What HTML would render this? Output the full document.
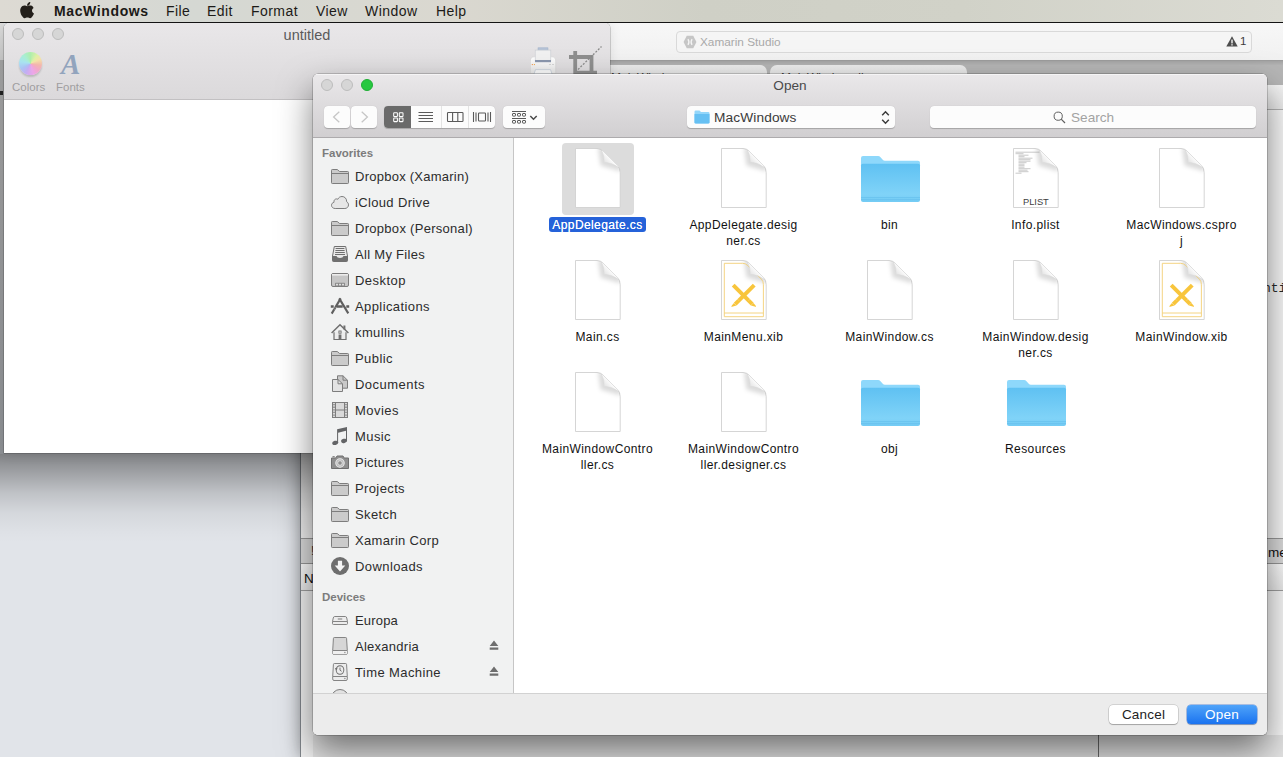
<!DOCTYPE html>
<html>
<head>
<meta charset="utf-8">
<title>Open</title>
<style>
html,body{margin:0;padding:0;}
body{width:1283px;height:757px;overflow:hidden;position:relative;background:#e1e4e9;font-family:"Liberation Sans",sans-serif;color:#222;}
.abs{position:absolute;}
/* menu bar */
#menubar{left:0;top:0;width:1283px;height:22px;background:linear-gradient(90deg,#dddad3 0%,#d5d8d3 15%,#dad8d0 35%,#cfd0c6 55%,#d1d2c8 75%,#dbdbd3 100%);border-bottom:1px solid #141414;z-index:50;}
#menubar span{position:absolute;top:3px;font-size:14px;line-height:17px;color:#1c1a17;white-space:nowrap;letter-spacing:0.45px;}
/* xamarin studio */
#xs{left:300px;top:23px;width:983px;height:734px;background:#e6e6e6;box-shadow:0 0 14px rgba(0,0,0,.3);}
#xs-toolbar{left:0;top:0;width:983px;height:37px;background:linear-gradient(#f7f7f7,#f1f1f1);}
#xs-search{left:376px;top:8px;width:574px;height:20px;border:1px solid #d9d9d9;border-radius:4px;background:#f5f5f5;}
#xs-tabs{left:0;top:37px;width:983px;height:25px;background:#b6b6b6;border-top:1px solid #9d9d9d;}
/* untitled window */
#untitled{left:4px;top:23px;width:606px;height:430px;background:#fff;border-radius:5px 5px 0 0;box-shadow:0 0 0 0.5px rgba(0,0,0,.3),0 1px 12px rgba(0,0,0,.10);z-index:10;}
#untitled .tb{left:0;top:0;width:606px;height:76px;border-radius:5px 5px 0 0;background:linear-gradient(#e9e7e9,#dbd9db);border-bottom:1px solid #c2c0c2;}
.tl{position:absolute;width:10px;height:10px;border-radius:50%;background:#d6d6d6;border:1px solid #bcbcbc;}
/* open dialog */
#dlg{left:313px;top:74px;width:954px;height:661px;background:#fff;border-radius:5px;box-shadow:0 0 0 0.5px rgba(0,0,0,.34),0 16px 34px rgba(0,0,0,.5);z-index:20;overflow:hidden;}
#dlg .head{left:0;top:0;width:954px;height:63px;background:linear-gradient(#eae8ea,#d1cfd1);border-bottom:1px solid #adabad;box-shadow:inset 0 1px 0 rgba(255,255,255,.55);}
#dlg .title{left:0;top:3px;width:954px;text-align:center;font-size:13.6px;line-height:18px;color:#4a4a4a;}
.btn{position:absolute;background:#fcfcfc;border-radius:4px;box-shadow:0 0.5px 0.8px rgba(0,0,0,.22);}
#side{left:0;top:64px;width:200px;height:555px;background:#f1f2f2;border-right:1px solid #c6c6c6;}
#side .h{position:absolute;left:9px;font-size:11.5px;font-weight:bold;color:#7c7c7c;line-height:14px;}
#side .it{position:absolute;left:42px;font-size:13px;letter-spacing:0.3px;line-height:18px;color:#2c2c2c;white-space:nowrap;}
#side .ic{position:absolute;left:17px;width:20px;height:18px;}
#side svg,#files svg{display:block;}
#files{left:201px;top:64px;width:753px;height:555px;background:#fff;}
.lab{position:absolute;width:140px;text-align:center;font-size:12px;letter-spacing:0.4px;line-height:16px;color:#111;white-space:nowrap;}
.sel{background:#2562d9;color:#fff;border-radius:3px;padding:0 3px 0 3px;display:inline-block;height:15px;line-height:17px;text-shadow:0 0 0.6px rgba(255,255,255,.9);}
#foot{left:0;top:619px;width:954px;height:42px;background:#ececec;border-top:1px solid #d2d2d2;}
</style>
</head>
<body>

<svg width="0" height="0" style="position:absolute"><defs>
<filter id="blur1" x="-10%" y="-300%" width="120%" height="700%"><feGaussianBlur stdDeviation="0.8"/></filter>
<filter id="blur2" x="-30%" y="-30%" width="160%" height="160%"><feGaussianBlur stdDeviation="2.2"/></filter>
<clipPath id="docclip"><path d="M2.5 0.5 H24 Q27.5 0.5 30 3 L44.6 17.6 Q47.2 20.4 47.2 24.5 V59.5 H2.5 Z"/></clipPath>
<linearGradient id="flapg" x1="0.85" y1="0.15" x2="0.2" y2="0.75"><stop offset="0" stop-color="#ffffff"/><stop offset="0.55" stop-color="#fbfbfb"/><stop offset="1" stop-color="#e4e4e4"/></linearGradient>
</defs></svg>
<!-- Xamarin Studio window (behind) -->
<div id="xs" class="abs">
  <div id="xs-toolbar" class="abs">
    <div id="xs-search" class="abs">
      <svg class="abs" style="left:6px;top:3px" width="14" height="14" viewBox="0 0 13 13"><polygon points="3.5,0.8 9.5,0.8 12.5,6.5 9.5,12.2 3.5,12.2 0.5,6.5" fill="#c6c6c6"/><path d="M4.6 3.8 Q6.4 6.5 4.6 9.2 M8.4 3.8 Q6.6 6.5 8.4 9.2" stroke="#f5f5f5" stroke-width="1.2" fill="none"/></svg>
      <span class="abs" style="left:23px;top:2px;font-size:11.8px;line-height:17px;color:#a9a9a9;white-space:nowrap">Xamarin Studio</span>
      <svg class="abs" style="left:549px;top:4px" width="12" height="11" viewBox="0 0 12 11"><path d="M6 0.3 L11.7 10.6 L0.3 10.6 Z" fill="#4d4d4d"/><rect x="5.3" y="3.6" width="1.4" height="3.8" fill="#f5f5f5"/><rect x="5.3" y="8.2" width="1.4" height="1.3" fill="#f5f5f5"/></svg>
      <span class="abs" style="left:563px;top:1px;font-size:11.5px;line-height:17px;color:#3c3c3c">1</span>
    </div>
  </div>
  <div id="xs-tabs" class="abs">
    <div class="abs" style="left:0;top:0;width:983px;height:4px;background:linear-gradient(#a4a4a4,#b4b4b4)"></div>
    <div class="abs" style="left:300px;top:4px;width:167px;height:22px;background:linear-gradient(#ededed,#e0e0e0);border-radius:0 7px 0 0;"></div>
    <div class="abs" style="left:470px;top:4px;width:197px;height:22px;background:linear-gradient(#ededed,#e0e0e0);border-radius:7px 7px 0 0;"></div>
    <span class="abs" style="left:311px;top:10px;font-size:12px;line-height:14px;color:#444;white-space:nowrap">MainWindow.cs</span>
    <span class="abs" style="left:481px;top:10px;font-size:12px;line-height:14px;color:#444;white-space:nowrap">MainWindow.xib</span>
    <span class="abs" style="left:452px;top:10px;font-size:11px;line-height:14px;color:#888">×</span>
    <span class="abs" style="left:650px;top:10px;font-size:11px;line-height:14px;color:#888">×</span>
  </div>
  <!-- left sliver of XS -->
  <div class="abs" style="left:0;top:62px;width:1px;height:672px;background:#80858b"></div>
  <div class="abs" style="left:1px;top:62px;width:14px;height:672px;background:#f2f2f2"></div>
  <div class="abs" style="left:1px;top:515px;width:14px;height:24px;background:#dcdcdc;border-top:1px solid #999;border-bottom:1px solid #999"></div>
  <div class="abs" style="left:1px;top:541px;width:14px;height:26px;background:linear-gradient(#ffffff,#ececec);border-bottom:1px solid #a0a0a0"></div>
  <span class="abs" style="left:4px;top:548px;font-size:13.5px;line-height:16px;color:#111">Name</span>
  <span class="abs" style="left:11px;top:520px;font-size:12px;line-height:16px;color:#333">!</span>
  <!-- right sliver of XS -->
  <div class="abs" style="left:967px;top:62px;width:16px;height:672px;background:#f9f9f9"></div>
  <div class="abs" style="left:967px;top:62px;width:16px;height:24px;background:linear-gradient(#f6f6f6,#ececec)"></div>
  <div class="abs" style="left:967px;top:86px;width:16px;height:1px;background:#b4b4b4"></div>
  <span class="abs" style="left:963px;top:258px;font-family:'Liberation Mono',monospace;font-size:13px;line-height:16px;color:#2a2a2a;white-space:nowrap">nti</span>
  <div class="abs" style="left:967px;top:515px;width:16px;height:24px;background:#dcdcdc;border-top:1px solid #999;border-bottom:1px solid #999"></div>
  <div class="abs" style="left:967px;top:541px;width:16px;height:26px;background:linear-gradient(#ffffff,#ececec);border-bottom:1px solid #a0a0a0"></div>
  <span class="abs" style="left:968px;top:522px;font-size:13.5px;line-height:16px;color:#111;white-space:nowrap">me</span>
  <!-- bottom below dialog -->
  <div class="abs" style="left:13px;top:712px;width:970px;height:22px;background:#e4e4e4"></div>
  <div class="abs" style="left:798px;top:700px;width:1px;height:34px;background:#6a6a6a"></div>
</div>

<!-- menu bar -->
<div id="menubar" class="abs">
  <svg class="abs" style="left:20px;top:2px" width="15" height="17" viewBox="0 0 15 17"><path d="M10.3 0 C10.4 1.1 10 2 9.4 2.7 C8.8 3.4 7.9 3.9 7 3.8 C6.9 2.8 7.4 1.8 7.9 1.2 C8.5 0.5 9.5 0 10.3 0 Z M13.6 5.9 C12.6 6.5 12 7.4 12 8.6 C12 10 12.8 11.1 14 11.6 C13.7 12.5 13.3 13.3 12.7 14.1 C12 15.1 11.2 16.2 10.1 16.2 C9 16.2 8.7 15.6 7.4 15.6 C6.1 15.6 5.7 16.2 4.7 16.2 C3.6 16.3 2.8 15.1 2 14.1 C0.5 12 -0.6 8.200000000000001 0.9 5.7 C1.7 4.4 3 3.6 4.4 3.6 C5.5 3.6 6.5 4.3 7.2 4.3 C7.8 4.3 9.1 3.5 10.4 3.6 C11 3.6 12.5 3.8 13.6 5.9 Z" fill="#231f1a"/></svg>
  <span style="left:54px;font-weight:bold;letter-spacing:0.62px">MacWindows</span>
  <span style="left:166px">File</span>
  <span style="left:207px">Edit</span>
  <span style="left:251px">Format</span>
  <span style="left:316px">View</span>
  <span style="left:365px">Window</span>
  <span style="left:436px">Help</span>
</div>

<!-- shadow under untitled window -->
<div class="abs" style="left:0;top:453px;width:330px;height:90px;z-index:5;background:linear-gradient(rgba(0,0,0,.43) 0,rgba(0,0,0,.41) 3px,rgba(0,0,0,.29) 20px,rgba(0,0,0,.15) 40px,rgba(0,0,0,.055) 60px,rgba(0,0,0,.012) 80px,rgba(0,0,0,0) 90px)"></div>
<div class="abs" style="left:0;top:60px;width:4px;height:394px;z-index:5;background:linear-gradient(#a0a0a0,#8c8f93)"></div>
<div class="abs" style="left:0;top:91px;width:3px;height:4px;z-index:5;background:#222"></div>
<div class="abs" style="left:0;top:23px;width:4px;height:37px;z-index:5;background:linear-gradient(#dcdcdc,#c6c6c6)"></div>
<!-- untitled window -->
<div id="untitled" class="abs">
  <div class="tb abs">
    <div class="tl" style="left:8px;top:5px"></div>
    <div class="tl" style="left:28px;top:5px"></div>
    <div class="tl" style="left:48px;top:5px"></div>
    <div class="abs" style="left:0;top:3px;width:606px;text-align:center;font-size:14.5px;line-height:18px;color:#5a5a5a">untitled</div>
    <div class="abs" style="left:15px;top:29px;width:23px;height:23px;border-radius:50%;background:conic-gradient(from 0deg,#a9f0a6 0deg,#dff2a0 40deg,#f6e3a2 65deg,#f5b3a8 100deg,#f4a3c6 130deg,#eea2ea 165deg,#c2a8f4 205deg,#a7c0f6 240deg,#a2e4f2 280deg,#a3f0d2 320deg,#a9f0a6 360deg);box-shadow:0 2px 2px rgba(0,0,0,.18);opacity:.9"></div>
    <div class="abs" style="left:8px;top:57px;font-size:11.5px;line-height:14px;color:#a09ea0">Colors</div>
    <div class="abs" style="left:57px;top:24px;font-family:'Liberation Serif',serif;font-style:italic;font-weight:bold;font-size:29px;line-height:34px;color:#92a4bd">A</div>
    <div class="abs" style="left:52px;top:57px;font-size:11.5px;line-height:14px;color:#a09ea0">Fonts</div>
    <svg class="abs" style="left:526px;top:24px" width="28" height="30" viewBox="0 0 28 30"><defs><linearGradient id="prb" x1="0" y1="0" x2="0" y2="1"><stop offset="0" stop-color="#ffffff"/><stop offset="1" stop-color="#e9e9e9"/></linearGradient></defs><rect x="8" y="0.8" width="10" height="3" fill="#b4c2d6" stroke="#9fb0c8" stroke-width="0.5"/><path d="M0.3 14 Q0.3 9.8 4.5 9.8 H21.5 Q25.7 9.8 25.7 14 V26.5 H0.3 Z" fill="url(#prb)" stroke="#d4d4d4" stroke-width="0.6"/><rect x="5.2" y="3.1" width="15.6" height="11" fill="#f1f1f1" stroke="#c9ccd2" stroke-width="0.6"/><rect x="5" y="13" width="16" height="2.2" fill="#8a96ad"/><rect x="1.8" y="17" width="1.1" height="1.1" fill="#f39a55"/><rect x="3.900000000000001" y="17" width="1.1" height="1.1" fill="#f3b055"/><rect x="19" y="17.2" width="2" height="0.8" fill="#cfcfcf"/><rect x="22" y="17.2" width="2" height="0.8" fill="#cfcfcf"/><path d="M4 27 L5.5 22.6 H20.5 L22 27 Z" fill="#fbfbfb" stroke="#b9c3d2" stroke-width="0.6"/></svg>
    <svg class="abs" style="left:565px;top:22px" width="36" height="32" viewBox="0 0 36 32"><path d="M0 12 H24.4 M22.5 12 V27.7 M6.2 6 V29.6 M4.3 27.7 H28" fill="none" stroke="#8f8f8f" stroke-width="3.8"/><path d="M9 24.5 L32.5 1.5" stroke="#8a8a8a" stroke-width="1.3" stroke-dasharray="2 1.5"/></svg>
  </div>
</div>

<!-- Open dialog -->
<div id="dlg" class="abs">
  <div class="head abs">
    <div class="tl" style="left:8px;top:5px"></div>
    <div class="tl" style="left:28px;top:5px"></div>
    <div class="tl" style="left:48px;top:5px;background:#27c840;border-color:#1fae34"></div>
    <div class="title abs">Open</div>
  </div>
  <!-- toolbar -->
  <div class="btn" style="left:11px;top:32px;width:26px;height:22px"><svg class="abs" style="left:8px;top:5px" width="9" height="12" viewBox="0 0 9 12"><path d="M7.3 0.8 L1.6 6 L7.3 11.2" fill="none" stroke="#c6c6c6" stroke-width="1.3"/></svg></div>
  <div class="btn" style="left:38px;top:32px;width:26px;height:22px"><svg class="abs" style="left:9px;top:5px" width="9" height="12" viewBox="0 0 9 12"><path d="M1.7 0.8 L7.4 6 L1.7 11.2" fill="none" stroke="#c6c6c6" stroke-width="1.3"/></svg></div>
  <div class="btn" style="left:71px;top:32px;width:111px;height:22px;overflow:hidden">
    <div class="abs" style="left:0;top:0;width:27px;height:22px;background:#6a6a6a"></div>
    <div class="abs" style="left:57px;top:0;width:1px;height:22px;background:#e3e3e3"></div>
    <div class="abs" style="left:84px;top:0;width:1px;height:22px;background:#e3e3e3"></div>
    <svg class="abs" style="left:0;top:0" width="111" height="22" viewBox="0 0 111 22">
      <g fill="none" stroke="#fff" stroke-width="1.05"><rect x="9.7" y="6.7" width="3.7" height="3.7" rx="0.5"/><rect x="15.3" y="6.7" width="3.7" height="3.7" rx="0.5"/><rect x="9.7" y="11.9" width="3.7" height="3.7" rx="0.5"/><rect x="15.3" y="11.9" width="3.7" height="3.7" rx="0.5"/></g>
      <path d="M34.5 6.5 H49 M34.5 9.5 H49 M34.5 12.5 H49 M34.5 15.5 H49" stroke="#5a5a5a" stroke-width="1"/>
      <g fill="none" stroke="#5a5a5a" stroke-width="1.1"><rect x="63.5" y="6.5" width="15.5" height="9" rx="0.8"/><path d="M68.6 6.5 V15.5 M73.8 6.5 V15.5"/></g>
      <g fill="none" stroke="#5a5a5a" stroke-width="1.1"><rect x="94.5" y="7" width="7" height="8" rx="0.8"/><path d="M89.5 6 V16 M92 6.5 V15.5 M104 6.5 V15.5 M106.5 6 V16"/></g>
    </svg>
  </div>
  <div class="btn" style="left:190px;top:32px;width:42px;height:22px">
    <svg class="abs" style="left:0;top:0" width="42" height="22" viewBox="0 0 42 22">
      <path d="M9 5.5 H23 M9 12.5 H23" stroke="#5a5a5a" stroke-width="1"/>
      <g fill="none" stroke="#5a5a5a" stroke-width="1"><rect x="9.5" y="7.5" width="3" height="2.6" rx="0.5"/><rect x="14.5" y="7.5" width="3" height="2.6" rx="0.5"/><rect x="19.5" y="7.5" width="3" height="2.6" rx="0.5"/><rect x="9.5" y="14.5" width="3" height="2.6" rx="0.5"/><rect x="14.5" y="14.5" width="3" height="2.6" rx="0.5"/><rect x="19.5" y="14.5" width="3" height="2.6" rx="0.5"/></g>
      <path d="M27.3 10 L30.5 13.2 L33.7 10" fill="none" stroke="#4a4a4a" stroke-width="1.5"/>
    </svg>
  </div>
  <div class="btn" style="left:374px;top:32px;width:208px;height:22px">
    <svg class="abs" style="left:7px;top:4px" width="16" height="14" viewBox="0 0 16 14"><path d="M0.5 1.8 Q0.5 0.5 1.8 0.5 H5.5 L7 2 H14.2 Q15.5 2 15.5 3.3 V12.2 Q15.5 13.5 14.2 13.5 H1.8 Q0.5 13.5 0.5 12.2 Z" fill="#93d6fa"/><path d="M0.5 4 H15.5 V12.2 Q15.5 13.5 14.2 13.5 H1.8 Q0.5 13.5 0.5 12.2 Z" fill="#66c0f3"/></svg>
    <span class="abs" style="left:27px;top:3px;font-size:13.7px;line-height:18px;color:#3a3a3a;letter-spacing:0.12px">MacWindows</span>
    <svg class="abs" style="left:194px;top:4px" width="9" height="15" viewBox="0 0 9 15"><path d="M1.2 5.2 L4.5 1.8 L7.8 5.2 M1.2 9.8 L4.5 13.2 L7.8 9.8" fill="none" stroke="#3c3c3c" stroke-width="1.5"/></svg>
  </div>
  <div class="btn" style="left:617px;top:32px;width:326px;height:22px">
    <svg class="abs" style="left:123px;top:5px" width="13" height="13" viewBox="0 0 13 13"><circle cx="5.2" cy="5.2" r="4.1" fill="none" stroke="#606060" stroke-width="1"/><path d="M8.2 8.2 L12 12" stroke="#606060" stroke-width="1.2"/></svg>
    <span class="abs" style="left:141px;top:3px;font-size:13.6px;line-height:18px;color:#a3a3a3">Search</span>
  </div>

  <div id="side" class="abs">
    <div class="h" style="top:8px">Favorites</div>
    <div class="ic" style="top:29px"><svg width="20" height="18" viewBox="0 0 20 18"><path d="M1.5 3.3 Q1.5 2.5 2.3 2.5 L7 2.5 Q7.6 2.5 8 3 L8.9 4.1 Q9.3 4.5 10 4.5 L17.7 4.5 Q18.5 4.5 18.5 5.3 L18.5 15.7 Q18.5 16.5 17.7 16.5 L2.3 16.5 Q1.5 16.5 1.5 15.7 Z" fill="#cbcbcb" stroke="#7d7d7d" stroke-width="1"/><path d="M1.5 6.5 H18.5" stroke="#7d7d7d" stroke-width="1"/></svg></div>
    <div class="it" style="top:30px;letter-spacing:0.25px">Dropbox (Xamarin)</div>
    <div class="ic" style="top:55px"><svg width="20" height="18" viewBox="0 0 20 18"><path d="M5.2 15.5 C3 15.5 1.5 14.1 1.5 12.3 C1.5 10.7 2.6 9.5 4.1 9.2 C4 8.9 4 8.7 4 8.4 C4 7 5.1 5.9 6.5 5.9 C7 5.9 7.4 6 7.8 6.3 C8.5 4.6 10.1 3.5 12 3.5 C14.6 3.5 16.6 5.5 16.6 8.1 C16.6 8.3 16.6 8.5 16.6 8.700000000000001 C17.8 9.3 18.5 10.5 18.5 11.9 C18.5 13.9 16.9 15.5 14.9 15.5 Z" fill="#e6e6e6" stroke="#7d7d7d" stroke-width="1"/></svg></div>
    <div class="it" style="top:56px;letter-spacing:0.35px">iCloud Drive</div>
    <div class="ic" style="top:81px"><svg width="20" height="18" viewBox="0 0 20 18"><path d="M1.5 3.3 Q1.5 2.5 2.3 2.5 L7 2.5 Q7.6 2.5 8 3 L8.9 4.1 Q9.3 4.5 10 4.5 L17.7 4.5 Q18.5 4.5 18.5 5.3 L18.5 15.7 Q18.5 16.5 17.7 16.5 L2.3 16.5 Q1.5 16.5 1.5 15.7 Z" fill="#cbcbcb" stroke="#7d7d7d" stroke-width="1"/><path d="M1.5 6.5 H18.5" stroke="#7d7d7d" stroke-width="1"/></svg></div>
    <div class="it" style="top:82px;letter-spacing:0.29px">Dropbox (Personal)</div>
    <div class="ic" style="top:107px"><svg width="20" height="18" viewBox="0 0 20 18"><path d="M4.3 1.5 H15.7 L17.5 11 V15.6 Q17.5 16.5 16.6 16.5 H3.4 Q2.5 16.5 2.5 15.6 V11 Z" fill="#e9e9e9" stroke="#707070" stroke-width="1"/><path d="M5.6 3.5 H14.4 M5.4 5.5 H14.6 M5.2 7.5 H14.8 M5 9.5 H15" stroke="#707070" stroke-width="1"/><path d="M2.5 11 H6.5 Q7 13 10 13 Q13 13 13.5 11 H17.5 V15.6 Q17.5 16.5 16.6 16.5 H3.4 Q2.5 16.5 2.5 15.6 Z" fill="#707070"/></svg></div>
    <div class="it" style="top:108px;letter-spacing:0.3px">All My Files</div>
    <div class="ic" style="top:133px"><svg width="20" height="18" viewBox="0 0 20 18"><rect x="1.5" y="2.5" width="17" height="13" rx="1.5" fill="#c6c6c6" stroke="#7d7d7d"/><rect x="2" y="3" width="16" height="1.6" fill="#ececec"/><rect x="5" y="11.8" width="10" height="3.2" rx="0.6" fill="#8a8a8a"/><rect x="6.2" y="12.8" width="1.6" height="1.6" fill="#f2f2f2"/><rect x="9.2" y="12.8" width="1.6" height="1.6" fill="#f2f2f2"/><rect x="12.2" y="12.8" width="1.6" height="1.6" fill="#f2f2f2"/></svg></div>
    <div class="it" style="top:134px;letter-spacing:0.47px">Desktop</div>
    <div class="ic" style="top:159px"><svg width="20" height="18" viewBox="0 0 20 18"><path d="M10.7 1.4 L1.7 16.6" stroke="#5e5e5e" stroke-width="2.1" fill="none"/><path d="M9.2 1.4 L18.3 16.4" stroke="#5e5e5e" stroke-width="2.1" fill="none"/><path d="M0.8 9.5 H3.7 M7 9.5 H12.7 M16.3 9.5 H19.2" stroke="#5e5e5e" stroke-width="2.4" fill="none"/><path d="M3.4 11.6 L4.6 12.3 M4.3 10 L5.5 10.700000000000001" stroke="#f3f3f3" stroke-width="0.5"/></svg></div>
    <div class="it" style="top:160px;letter-spacing:0.41px">Applications</div>
    <div class="ic" style="top:185px"><svg width="20" height="18" viewBox="0 0 20 18"><path d="M4 9.2 V16.5 H16 V9.2" fill="#ececec" stroke="#6f6f6f" stroke-width="1.2"/><path d="M1.6 10 L10 1.8 L18.4 10" fill="none" stroke="#6f6f6f" stroke-width="1.5" stroke-linejoin="miter"/><rect x="13.4" y="2.5" width="2" height="4" fill="#6f6f6f"/><rect x="8.6" y="11.5" width="2.8" height="5" fill="#6f6f6f"/><rect x="8.9" y="8" width="2.2" height="2.2" fill="none" stroke="#6f6f6f" stroke-width="0.9"/></svg></div>
    <div class="it" style="top:186px;letter-spacing:0.38px">kmullins</div>
    <div class="ic" style="top:211px"><svg width="20" height="18" viewBox="0 0 20 18"><path d="M1.5 3.3 Q1.5 2.5 2.3 2.5 L7 2.5 Q7.6 2.5 8 3 L8.9 4.1 Q9.3 4.5 10 4.5 L17.7 4.5 Q18.5 4.5 18.5 5.3 L18.5 15.7 Q18.5 16.5 17.7 16.5 L2.3 16.5 Q1.5 16.5 1.5 15.7 Z" fill="#cbcbcb" stroke="#7d7d7d" stroke-width="1"/><path d="M1.5 6.5 H18.5" stroke="#7d7d7d" stroke-width="1"/></svg></div>
    <div class="it" style="top:212px;letter-spacing:0.43px">Public</div>
    <div class="ic" style="top:237px"><svg width="20" height="18" viewBox="0 0 20 18"><path d="M7.5 0.8 H13 L17.5 5.2 V13.2 H7.5 Z" fill="#c9c9c9" stroke="#7d7d7d" stroke-width="1"/><path d="M13 0.8 V5.2 H17.5" fill="none" stroke="#7d7d7d" stroke-width="1"/><path d="M2.5 4.5 H8 L12.5 8.800000000000001 V16.5 H2.5 Z" fill="#e3e3e3" stroke="#7d7d7d" stroke-width="1"/><path d="M8 4.5 V8.8 H12.5" fill="none" stroke="#7d7d7d" stroke-width="1"/></svg></div>
    <div class="it" style="top:238px;letter-spacing:0.47px">Documents</div>
    <div class="ic" style="top:263px"><svg width="20" height="18" viewBox="0 0 20 18"><rect x="2.5" y="1.5" width="15" height="15" fill="#d9d9d9" stroke="#7d7d7d"/><path d="M5.5 1.5 V16.5 M14.5 1.5 V16.5 M5.5 9 H14.5" stroke="#7d7d7d" stroke-width="1"/><path d="M4 3 V15.5" stroke="#7d7d7d" stroke-width="1.4" stroke-dasharray="1.3 1.3"/><path d="M16 3 V15.5" stroke="#7d7d7d" stroke-width="1.4" stroke-dasharray="1.3 1.3"/></svg></div>
    <div class="it" style="top:264px;letter-spacing:0.47px">Movies</div>
    <div class="ic" style="top:289px"><svg width="20" height="18" viewBox="0 0 20 18"><g fill="#636466"><path d="M7.1 2.3 L17 0 V14 H16 V3.7 L8.1 5.8 V16 H7.1 Z"/><ellipse cx="5.2" cy="15.9" rx="3" ry="2.1" transform="rotate(-15 5.2 15.9)"/><ellipse cx="14.1" cy="13.9" rx="3" ry="2.1" transform="rotate(-15 14.1 13.9)"/></g></svg></div>
    <div class="it" style="top:290px;letter-spacing:0.41px">Music</div>
    <div class="ic" style="top:315px"><svg width="20" height="18" viewBox="0 0 20 18"><path d="M1.5 5 H5.8 L7 3 H13 L14.2 5 H18.5 V15.5 H1.5 Z" fill="#8f8f8f" stroke="#6f6f6f" stroke-width="1"/><rect x="2.5" y="3.2" width="2.2" height="1" fill="#6f6f6f"/><circle cx="10" cy="10" r="4.2" fill="#b9b9b9" stroke="#ededed" stroke-width="1.1"/><circle cx="10" cy="10" r="2.3" fill="#8f8f8f" stroke="#ededed" stroke-width="0.8"/></svg></div>
    <div class="it" style="top:316px;letter-spacing:0.25px">Pictures</div>
    <div class="ic" style="top:341px"><svg width="20" height="18" viewBox="0 0 20 18"><path d="M1.5 3.3 Q1.5 2.5 2.3 2.5 L7 2.5 Q7.6 2.5 8 3 L8.9 4.1 Q9.3 4.5 10 4.5 L17.7 4.5 Q18.5 4.5 18.5 5.3 L18.5 15.7 Q18.5 16.5 17.7 16.5 L2.3 16.5 Q1.5 16.5 1.5 15.7 Z" fill="#cbcbcb" stroke="#7d7d7d" stroke-width="1"/><path d="M1.5 6.5 H18.5" stroke="#7d7d7d" stroke-width="1"/></svg></div>
    <div class="it" style="top:342px;letter-spacing:0.38px">Projects</div>
    <div class="ic" style="top:367px"><svg width="20" height="18" viewBox="0 0 20 18"><path d="M1.5 3.3 Q1.5 2.5 2.3 2.5 L7 2.5 Q7.6 2.5 8 3 L8.9 4.1 Q9.3 4.5 10 4.5 L17.7 4.5 Q18.5 4.5 18.5 5.3 L18.5 15.7 Q18.5 16.5 17.7 16.5 L2.3 16.5 Q1.5 16.5 1.5 15.7 Z" fill="#cbcbcb" stroke="#7d7d7d" stroke-width="1"/><path d="M1.5 6.5 H18.5" stroke="#7d7d7d" stroke-width="1"/></svg></div>
    <div class="it" style="top:368px;letter-spacing:0.38px">Sketch</div>
    <div class="ic" style="top:393px"><svg width="20" height="18" viewBox="0 0 20 18"><path d="M1.5 3.3 Q1.5 2.5 2.3 2.5 L7 2.5 Q7.6 2.5 8 3 L8.9 4.1 Q9.3 4.5 10 4.5 L17.7 4.5 Q18.5 4.5 18.5 5.3 L18.5 15.7 Q18.5 16.5 17.7 16.5 L2.3 16.5 Q1.5 16.5 1.5 15.7 Z" fill="#cbcbcb" stroke="#7d7d7d" stroke-width="1"/><path d="M1.5 6.5 H18.5" stroke="#7d7d7d" stroke-width="1"/></svg></div>
    <div class="it" style="top:394px;letter-spacing:0.32px">Xamarin Corp</div>
    <div class="ic" style="top:419px"><svg width="20" height="18" viewBox="0 0 20 18"><circle cx="10" cy="9" r="9" fill="#6e6e6e"/><path d="M7.9 3.8 H12.1 V8.6 H15.3 L10 14.4 L4.7 8.6 H7.9 Z" fill="#f4f4f4"/></svg></div>
    <div class="it" style="top:420px;letter-spacing:0.41px">Downloads</div>
    <div class="h" style="top:452px">Devices</div>
    <div class="ic" style="top:473px"><svg width="20" height="18" viewBox="0 0 20 18"><g transform="translate(1.1 0) scale(0.89 1)"><path d="M4 5.5 H16 Q17.2 5.5 17.6 7 L18.4 10.5 V12.6 Q18.4 13.5 17.4 13.5 H2.6 Q1.6 13.5 1.6 12.6 V10.5 L2.4 7 Q2.8 5.5 4 5.5 Z" fill="#ececec" stroke="#7d7d7d" stroke-width="1"/><path d="M1.8 10.5 H18.2" stroke="#7d7d7d" stroke-width="1"/><path d="M7.5 8 H12.5" stroke="#7d7d7d" stroke-width="1.2"/></g></svg></div>
    <div class="it" style="top:474px;letter-spacing:0.18px">Europa</div>
    <div class="ic" style="top:499px"><svg width="20" height="18" viewBox="0 0 20 18"><g transform="translate(1.1 0) scale(0.89 1)"><path d="M3.6 0.5 H16.4 Q17.4 0.5 17.4 1.6 L18.2 13.5 V15.9 Q18.2 17.5 16.8 17.5 H3.2 Q1.8 17.5 1.8 15.9 V13.5 L2.6 1.6 Q2.6 0.5 3.6 0.5 Z" fill="#d6d6d6" stroke="#7d7d7d" stroke-width="1"/><path d="M2 13.5 H18 V16 Q18 17.3 16.8 17.3 H3.2 Q2 17.3 2 16 Z" fill="#f0f0f0"/><path d="M2 13.5 H18" stroke="#7d7d7d" stroke-width="1"/><circle cx="15.5" cy="15.5" r="0.7" fill="#7d7d7d"/></g></svg></div>
    <div class="it" style="top:500px;letter-spacing:0.26px">Alexandria</div>
    <div class="abs" style="left:176px;top:502px;width:10px;height:11px"><svg width="10" height="11" viewBox="0 0 10 11"><path d="M5 0.5 L9.3 6 H0.7 Z M0.7 7.6 H9.3 V9.8 H0.7 Z" fill="#6e6e6e"/></svg></div>
    <div class="ic" style="top:525px"><svg width="20" height="18" viewBox="0 0 20 18"><g transform="translate(1.1 0) scale(0.89 1)"><path d="M3.6 0.5 H16.4 Q17.4 0.5 17.4 1.6 L18.2 13.5 V15.9 Q18.2 17.5 16.8 17.5 H3.2 Q1.8 17.5 1.8 15.9 V13.5 L2.6 1.6 Q2.6 0.5 3.6 0.5 Z" fill="#ececec" stroke="#7d7d7d" stroke-width="1"/><path d="M2 13.5 H18" stroke="#7d7d7d" stroke-width="1"/><circle cx="15.5" cy="15.5" r="0.7" fill="#7d7d7d"/><circle cx="10" cy="7" r="4.3" fill="none" stroke="#6f6f6f" stroke-width="1.1"/><path d="M10 4.6 V7.2 L11.8 8.3" fill="none" stroke="#6f6f6f" stroke-width="1"/><path d="M4.2 5 L5.8 7.6 L7.4 5.2 Z" fill="#6f6f6f"/></g></svg></div>
    <div class="it" style="top:526px;letter-spacing:0.4px">Time Machine</div>
    <div class="abs" style="left:176px;top:528px;width:10px;height:11px"><svg width="10" height="11" viewBox="0 0 10 11"><path d="M5 0.5 L9.3 6 H0.7 Z M0.7 7.6 H9.3 V9.8 H0.7 Z" fill="#6e6e6e"/></svg></div>
    <div class="ic" style="top:551px"><svg width="20" height="18" viewBox="0 0 20 18"><circle cx="10" cy="9" r="8.5" fill="#e2e2e2" stroke="#7d7d7d"/></svg></div>
  </div>
  <div id="files" class="abs">
    <div class="abs" style="left:47.5px;top:5px;width:72px;height:72px;border-radius:4px;background:#dcdcdc"></div>
    <div class="abs" style="left:59.0px;top:9.5px"><svg width="50" height="62" viewBox="0 0 50 62"><path d="M3.5 59.9 H46.5" stroke="#000" stroke-opacity=".30" stroke-width="1.6" filter="url(#blur1)"/><path d="M2.5 0.5 H24 Q27.5 0.5 30 3 L44.6 17.6 Q47.2 20.4 47.2 24.5 V59.5 H2.5 Z" fill="#fff" stroke="#d0d0d0" stroke-width="0.9"/><g clip-path="url(#docclip)"><path d="M25 0 L27.5 17.5 L47.5 23.5 L47.5 0 Z" fill="#000" fill-opacity=".14" filter="url(#blur2)"/></g><path d="M28.6 2 Q31.6 8 31.2 14.2 Q39 14.4 46 19.6 Q45.6 18.500000000000004 44.6 17.6 L30 3 Q29.4 2.4 28.6 2 Z" fill="url(#flapg)" stroke="#d9d9d9" stroke-width="0.4"/></svg></div>
    <div class="lab" style="left:13.5px;top:79px"><span class="sel">AppDelegate.cs</span></div>
    <div class="abs" style="left:205.0px;top:9.5px"><svg width="50" height="62" viewBox="0 0 50 62"><path d="M3.5 59.9 H46.5" stroke="#000" stroke-opacity=".30" stroke-width="1.6" filter="url(#blur1)"/><path d="M2.5 0.5 H24 Q27.5 0.5 30 3 L44.6 17.6 Q47.2 20.4 47.2 24.5 V59.5 H2.5 Z" fill="#fff" stroke="#d0d0d0" stroke-width="0.9"/><g clip-path="url(#docclip)"><path d="M25 0 L27.5 17.5 L47.5 23.5 L47.5 0 Z" fill="#000" fill-opacity=".14" filter="url(#blur2)"/></g><path d="M28.6 2 Q31.6 8 31.2 14.2 Q39 14.4 46 19.6 Q45.6 18.500000000000004 44.6 17.6 L30 3 Q29.4 2.4 28.6 2 Z" fill="url(#flapg)" stroke="#d9d9d9" stroke-width="0.4"/></svg></div>
    <div class="lab" style="left:159.5px;top:79px">AppDelegate.desig<br>ner.cs</div>
    <div class="abs" style="left:345.70000000000005px;top:16.5px"><svg width="62" height="50" viewBox="0 0 62 50"><defs><linearGradient id="bf3" x1="0" y1="0" x2="0" y2="1"><stop offset="0" stop-color="#5fc1f2"/><stop offset="0.8" stop-color="#80d3f8"/><stop offset="1" stop-color="#74ccf5"/></linearGradient></defs><path d="M1.5 47.4 H59.5" stroke="#000" stroke-opacity=".16" stroke-width="1.2" filter="url(#blur1)"/><path d="M1 3 Q1 1 3 1 H18 Q19.5 1 20.5 2.2 L22.5 4.6 Q23.5 5.8 25 5.8 H58 Q60 5.8 60 7.8 V20 H1 Z" fill="#8ed8fb"/><path d="M1 10.5 Q1 8.8 2.8 8.8 H58.2 Q60 8.8 60 10.5 V44.9 Q60 46.9 58 46.9 H3 Q1 46.9 1 44.9 Z" fill="url(#bf3)"/><path d="M1 42.6 H60 M1 44.7 H60" stroke="#5db9ea" stroke-opacity=".7" stroke-width="0.8"/></svg></div>
    <div class="lab" style="left:305.5px;top:79px">bin</div>
    <div class="abs" style="left:497.0px;top:9.5px"><svg width="50" height="62" viewBox="0 0 50 62"><path d="M3.5 59.9 H46.5" stroke="#000" stroke-opacity=".30" stroke-width="1.6" filter="url(#blur1)"/><path d="M2.5 0.5 H24 Q27.5 0.5 30 3 L44.6 17.6 Q47.2 20.4 47.2 24.5 V59.5 H2.5 Z" fill="#fff" stroke="#d0d0d0" stroke-width="0.9"/><g clip-path="url(#docclip)"><path d="M25 0 L27.5 17.5 L47.5 23.5 L47.5 0 Z" fill="#000" fill-opacity=".14" filter="url(#blur2)"/></g><path d="M4.5 4.2 h24" stroke="#9a9a9a" stroke-width="0.55"/><path d="M4.5 5.7 h8" stroke="#9a9a9a" stroke-width="0.55"/><path d="M7.5 7.2 h10" stroke="#9a9a9a" stroke-width="0.55"/><path d="M7.5 8.7 h6" stroke="#9a9a9a" stroke-width="0.55"/><path d="M7.5 10.2 h14" stroke="#9a9a9a" stroke-width="0.55"/><path d="M7.5 11.7 h12" stroke="#9a9a9a" stroke-width="0.55"/><path d="M7.5 13.2 h12" stroke="#9a9a9a" stroke-width="0.55"/><path d="M7.5 14.7 h8" stroke="#9a9a9a" stroke-width="0.55"/><path d="M7.5 16.2 h6" stroke="#9a9a9a" stroke-width="0.55"/><path d="M7.5 17.7 h6" stroke="#9a9a9a" stroke-width="0.55"/><path d="M7.5 19.2 h6" stroke="#9a9a9a" stroke-width="0.55"/><path d="M7.5 20.7 h12" stroke="#9a9a9a" stroke-width="0.55"/><path d="M7.5 22.2 h9" stroke="#9a9a9a" stroke-width="0.55"/><path d="M7.5 23.7 h10" stroke="#9a9a9a" stroke-width="0.55"/><path d="M4.5 25.2 h6" stroke="#9a9a9a" stroke-width="0.55"/><text x="24.9" y="56.9" text-anchor="middle" font-family="Liberation Sans, sans-serif" font-size="9.3" fill="#404040">PLIST</text><path d="M28.6 2 Q31.6 8 31.2 14.2 Q39 14.4 46 19.6 Q45.6 18.500000000000004 44.6 17.6 L30 3 Q29.4 2.4 28.6 2 Z" fill="url(#flapg)" stroke="#d9d9d9" stroke-width="0.4"/></svg></div>
    <div class="lab" style="left:451.5px;top:79px">Info.plist</div>
    <div class="abs" style="left:643.0px;top:9.5px"><svg width="50" height="62" viewBox="0 0 50 62"><path d="M3.5 59.9 H46.5" stroke="#000" stroke-opacity=".30" stroke-width="1.6" filter="url(#blur1)"/><path d="M2.5 0.5 H24 Q27.5 0.5 30 3 L44.6 17.6 Q47.2 20.4 47.2 24.5 V59.5 H2.5 Z" fill="#fff" stroke="#d0d0d0" stroke-width="0.9"/><g clip-path="url(#docclip)"><path d="M25 0 L27.5 17.5 L47.5 23.5 L47.5 0 Z" fill="#000" fill-opacity=".14" filter="url(#blur2)"/></g><path d="M28.6 2 Q31.6 8 31.2 14.2 Q39 14.4 46 19.6 Q45.6 18.500000000000004 44.6 17.6 L30 3 Q29.4 2.4 28.6 2 Z" fill="url(#flapg)" stroke="#d9d9d9" stroke-width="0.4"/></svg></div>
    <div class="lab" style="left:597.5px;top:79px">MacWindows.cspro<br>j</div>
    <div class="abs" style="left:59.0px;top:121.5px"><svg width="50" height="62" viewBox="0 0 50 62"><path d="M3.5 59.9 H46.5" stroke="#000" stroke-opacity=".30" stroke-width="1.6" filter="url(#blur1)"/><path d="M2.5 0.5 H24 Q27.5 0.5 30 3 L44.6 17.6 Q47.2 20.4 47.2 24.5 V59.5 H2.5 Z" fill="#fff" stroke="#d0d0d0" stroke-width="0.9"/><g clip-path="url(#docclip)"><path d="M25 0 L27.5 17.5 L47.5 23.5 L47.5 0 Z" fill="#000" fill-opacity=".14" filter="url(#blur2)"/></g><path d="M28.6 2 Q31.6 8 31.2 14.2 Q39 14.4 46 19.6 Q45.6 18.500000000000004 44.6 17.6 L30 3 Q29.4 2.4 28.6 2 Z" fill="url(#flapg)" stroke="#d9d9d9" stroke-width="0.4"/></svg></div>
    <div class="lab" style="left:13.5px;top:191px">Main.cs</div>
    <div class="abs" style="left:205.0px;top:121.5px"><svg width="50" height="62" viewBox="0 0 50 62"><path d="M3.5 59.9 H46.5" stroke="#000" stroke-opacity=".30" stroke-width="1.6" filter="url(#blur1)"/><path d="M2.5 0.5 H24 Q27.5 0.5 30 3 L44.6 17.6 Q47.2 20.4 47.2 24.5 V59.5 H2.5 Z" fill="#fff" stroke="#d0d0d0" stroke-width="0.9"/><g clip-path="url(#docclip)"><path d="M25 0 L27.5 17.5 L47.5 23.5 L47.5 0 Z" fill="#000" fill-opacity=".14" filter="url(#blur2)"/></g><path d="M5.3 3.3 H23.5 Q26.5 3.3 28.6 5.4 L42.4 19.2 Q44.4 21.2 44.4 24.5 V56.7 H5.3 Z" fill="none" stroke="#f3cf74" stroke-width="0.9"/><path d="M5.3 53 H44.4" stroke="#f3cf74" stroke-width="0.9"/><g transform="translate(0 -1)"><path d="M14.2 26.2 L33.2 45.2" stroke="#f8c53c" stroke-width="4" stroke-linecap="butt"/><path d="M35.2 26.2 L16.2 45.2" stroke="#f8c53c" stroke-width="4" stroke-linecap="butt"/><path d="M34.5 43.9 L36.6 46.6 L37 48 L35.6 47.6 L31.9 46.5 Z" fill="#f8c53c"/><path d="M14.9 43.9 L12.8 46.4 L12.3 48.1 L14 47.5 L17.5 46.5 Z" fill="#f8c53c"/><path d="M29.6 41.6 L31.4 39.8 M19.8 41.6 L18 39.8" stroke="#fff" stroke-opacity=".55" stroke-width="0.5"/></g><path d="M28.6 2 Q31.6 8 31.2 14.2 Q39 14.4 46 19.6 Q45.6 18.500000000000004 44.6 17.6 L30 3 Q29.4 2.4 28.6 2 Z" fill="url(#flapg)" stroke="#d9d9d9" stroke-width="0.4"/></svg></div>
    <div class="lab" style="left:159.5px;top:191px">MainMenu.xib</div>
    <div class="abs" style="left:351.0px;top:121.5px"><svg width="50" height="62" viewBox="0 0 50 62"><path d="M3.5 59.9 H46.5" stroke="#000" stroke-opacity=".30" stroke-width="1.6" filter="url(#blur1)"/><path d="M2.5 0.5 H24 Q27.5 0.5 30 3 L44.6 17.6 Q47.2 20.4 47.2 24.5 V59.5 H2.5 Z" fill="#fff" stroke="#d0d0d0" stroke-width="0.9"/><g clip-path="url(#docclip)"><path d="M25 0 L27.5 17.5 L47.5 23.5 L47.5 0 Z" fill="#000" fill-opacity=".14" filter="url(#blur2)"/></g><path d="M28.6 2 Q31.6 8 31.2 14.2 Q39 14.4 46 19.6 Q45.6 18.500000000000004 44.6 17.6 L30 3 Q29.4 2.4 28.6 2 Z" fill="url(#flapg)" stroke="#d9d9d9" stroke-width="0.4"/></svg></div>
    <div class="lab" style="left:305.5px;top:191px">MainWindow.cs</div>
    <div class="abs" style="left:497.0px;top:121.5px"><svg width="50" height="62" viewBox="0 0 50 62"><path d="M3.5 59.9 H46.5" stroke="#000" stroke-opacity=".30" stroke-width="1.6" filter="url(#blur1)"/><path d="M2.5 0.5 H24 Q27.5 0.5 30 3 L44.6 17.6 Q47.2 20.4 47.2 24.5 V59.5 H2.5 Z" fill="#fff" stroke="#d0d0d0" stroke-width="0.9"/><g clip-path="url(#docclip)"><path d="M25 0 L27.5 17.5 L47.5 23.5 L47.5 0 Z" fill="#000" fill-opacity=".14" filter="url(#blur2)"/></g><path d="M28.6 2 Q31.6 8 31.2 14.2 Q39 14.4 46 19.6 Q45.6 18.500000000000004 44.6 17.6 L30 3 Q29.4 2.4 28.6 2 Z" fill="url(#flapg)" stroke="#d9d9d9" stroke-width="0.4"/></svg></div>
    <div class="lab" style="left:451.5px;top:191px">MainWindow.desig<br>ner.cs</div>
    <div class="abs" style="left:643.0px;top:121.5px"><svg width="50" height="62" viewBox="0 0 50 62"><path d="M3.5 59.9 H46.5" stroke="#000" stroke-opacity=".30" stroke-width="1.6" filter="url(#blur1)"/><path d="M2.5 0.5 H24 Q27.5 0.5 30 3 L44.6 17.6 Q47.2 20.4 47.2 24.5 V59.5 H2.5 Z" fill="#fff" stroke="#d0d0d0" stroke-width="0.9"/><g clip-path="url(#docclip)"><path d="M25 0 L27.5 17.5 L47.5 23.5 L47.5 0 Z" fill="#000" fill-opacity=".14" filter="url(#blur2)"/></g><path d="M5.3 3.3 H23.5 Q26.5 3.3 28.6 5.4 L42.4 19.2 Q44.4 21.2 44.4 24.5 V56.7 H5.3 Z" fill="none" stroke="#f3cf74" stroke-width="0.9"/><path d="M5.3 53 H44.4" stroke="#f3cf74" stroke-width="0.9"/><g transform="translate(0 -1)"><path d="M14.2 26.2 L33.2 45.2" stroke="#f8c53c" stroke-width="4" stroke-linecap="butt"/><path d="M35.2 26.2 L16.2 45.2" stroke="#f8c53c" stroke-width="4" stroke-linecap="butt"/><path d="M34.5 43.9 L36.6 46.6 L37 48 L35.6 47.6 L31.9 46.5 Z" fill="#f8c53c"/><path d="M14.9 43.9 L12.8 46.4 L12.3 48.1 L14 47.5 L17.5 46.5 Z" fill="#f8c53c"/><path d="M29.6 41.6 L31.4 39.8 M19.8 41.6 L18 39.8" stroke="#fff" stroke-opacity=".55" stroke-width="0.5"/></g><path d="M28.6 2 Q31.6 8 31.2 14.2 Q39 14.4 46 19.6 Q45.6 18.500000000000004 44.6 17.6 L30 3 Q29.4 2.4 28.6 2 Z" fill="url(#flapg)" stroke="#d9d9d9" stroke-width="0.4"/></svg></div>
    <div class="lab" style="left:597.5px;top:191px">MainWindow.xib</div>
    <div class="abs" style="left:59.0px;top:233.5px"><svg width="50" height="62" viewBox="0 0 50 62"><path d="M3.5 59.9 H46.5" stroke="#000" stroke-opacity=".30" stroke-width="1.6" filter="url(#blur1)"/><path d="M2.5 0.5 H24 Q27.5 0.5 30 3 L44.6 17.6 Q47.2 20.4 47.2 24.5 V59.5 H2.5 Z" fill="#fff" stroke="#d0d0d0" stroke-width="0.9"/><g clip-path="url(#docclip)"><path d="M25 0 L27.5 17.5 L47.5 23.5 L47.5 0 Z" fill="#000" fill-opacity=".14" filter="url(#blur2)"/></g><path d="M28.6 2 Q31.6 8 31.2 14.2 Q39 14.4 46 19.6 Q45.6 18.500000000000004 44.6 17.6 L30 3 Q29.4 2.4 28.6 2 Z" fill="url(#flapg)" stroke="#d9d9d9" stroke-width="0.4"/></svg></div>
    <div class="lab" style="left:13.5px;top:303px">MainWindowContro<br>ller.cs</div>
    <div class="abs" style="left:205.0px;top:233.5px"><svg width="50" height="62" viewBox="0 0 50 62"><path d="M3.5 59.9 H46.5" stroke="#000" stroke-opacity=".30" stroke-width="1.6" filter="url(#blur1)"/><path d="M2.5 0.5 H24 Q27.5 0.5 30 3 L44.6 17.6 Q47.2 20.4 47.2 24.5 V59.5 H2.5 Z" fill="#fff" stroke="#d0d0d0" stroke-width="0.9"/><g clip-path="url(#docclip)"><path d="M25 0 L27.5 17.5 L47.5 23.5 L47.5 0 Z" fill="#000" fill-opacity=".14" filter="url(#blur2)"/></g><path d="M28.6 2 Q31.6 8 31.2 14.2 Q39 14.4 46 19.6 Q45.6 18.500000000000004 44.6 17.6 L30 3 Q29.4 2.4 28.6 2 Z" fill="url(#flapg)" stroke="#d9d9d9" stroke-width="0.4"/></svg></div>
    <div class="lab" style="left:159.5px;top:303px">MainWindowContro<br>ller.designer.cs</div>
    <div class="abs" style="left:345.70000000000005px;top:240.5px"><svg width="62" height="50" viewBox="0 0 62 50"><defs><linearGradient id="bf13" x1="0" y1="0" x2="0" y2="1"><stop offset="0" stop-color="#5fc1f2"/><stop offset="0.8" stop-color="#80d3f8"/><stop offset="1" stop-color="#74ccf5"/></linearGradient></defs><path d="M1.5 47.4 H59.5" stroke="#000" stroke-opacity=".16" stroke-width="1.2" filter="url(#blur1)"/><path d="M1 3 Q1 1 3 1 H18 Q19.5 1 20.5 2.2 L22.5 4.6 Q23.5 5.8 25 5.8 H58 Q60 5.8 60 7.8 V20 H1 Z" fill="#8ed8fb"/><path d="M1 10.5 Q1 8.8 2.8 8.8 H58.2 Q60 8.8 60 10.5 V44.9 Q60 46.9 58 46.9 H3 Q1 46.9 1 44.9 Z" fill="url(#bf13)"/><path d="M1 42.6 H60 M1 44.7 H60" stroke="#5db9ea" stroke-opacity=".7" stroke-width="0.8"/></svg></div>
    <div class="lab" style="left:305.5px;top:303px">obj</div>
    <div class="abs" style="left:491.70000000000005px;top:240.5px"><svg width="62" height="50" viewBox="0 0 62 50"><defs><linearGradient id="bf14" x1="0" y1="0" x2="0" y2="1"><stop offset="0" stop-color="#5fc1f2"/><stop offset="0.8" stop-color="#80d3f8"/><stop offset="1" stop-color="#74ccf5"/></linearGradient></defs><path d="M1.5 47.4 H59.5" stroke="#000" stroke-opacity=".16" stroke-width="1.2" filter="url(#blur1)"/><path d="M1 3 Q1 1 3 1 H18 Q19.5 1 20.5 2.2 L22.5 4.6 Q23.5 5.8 25 5.8 H58 Q60 5.8 60 7.8 V20 H1 Z" fill="#8ed8fb"/><path d="M1 10.5 Q1 8.8 2.8 8.8 H58.2 Q60 8.8 60 10.5 V44.9 Q60 46.9 58 46.9 H3 Q1 46.9 1 44.9 Z" fill="url(#bf14)"/><path d="M1 42.6 H60 M1 44.7 H60" stroke="#5db9ea" stroke-opacity=".7" stroke-width="0.8"/></svg></div>
    <div class="lab" style="left:451.5px;top:303px">Resources</div>
  </div>
  <div id="foot" class="abs">
    <div class="abs" style="left:796px;top:11px;width:69px;height:19px;border-radius:4px;background:#fff;box-shadow:0 0 0 0.5px rgba(0,0,0,.22),0 1px 1px rgba(0,0,0,.22);text-align:center;font-size:13.5px;line-height:20px;color:#222;letter-spacing:0.2px">Cancel</div>
    <div class="abs" style="left:874px;top:11px;width:70px;height:19px;border-radius:4px;background:linear-gradient(#4fa3f9,#1a73f0);box-shadow:0 0 0 0.5px rgba(10,80,200,.6),0 1px 1px rgba(0,0,0,.25);text-align:center;font-size:13.5px;line-height:20px;color:#fff;letter-spacing:0.2px">Open</div>
  </div>
</div>

</body>
</html>
